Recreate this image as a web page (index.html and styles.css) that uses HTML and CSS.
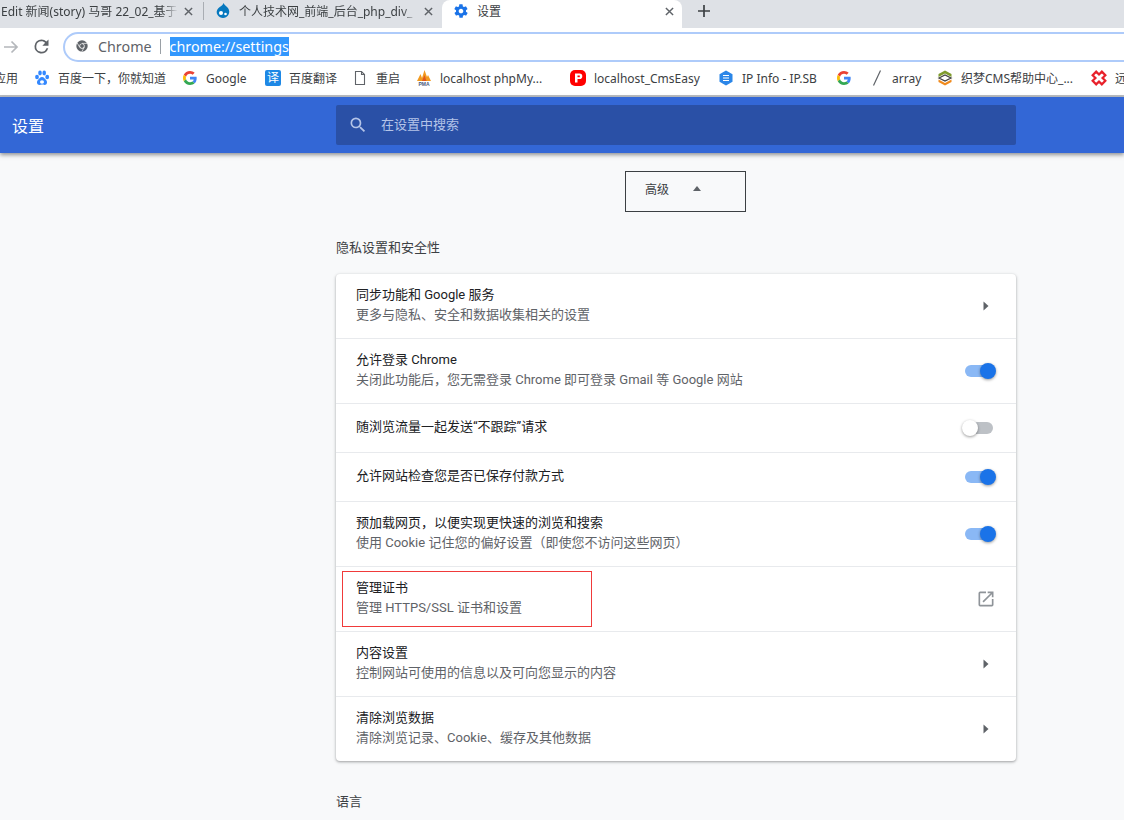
FILE: index.html
```html
<!DOCTYPE html>
<html lang="zh-CN">
<head>
    <meta charset="UTF-8">
    <title>设置</title>
    <link rel="stylesheet" href="styles.css">
</head>
<body>
    <svg class="defs" width="0" height="0">
        <symbol id="close" viewBox="0 0 10 10"><path d="M1 1l8 8M9 1l-8 8" stroke="#5f6368" stroke-width="1.600" fill="none"/></symbol>
        <symbol id="google" viewBox="0 0 48 48">
            <path fill="#EA4335" d="M24 9.500c3.500 0 6.700 1.300 9.100 3.500l6.800-6.800C35.800 2.400 30.300 0 24 0 14.600 0 6.500 5.400 2.600 13.200l7.900 6.100C12.400 13.600 17.700 9.500 24 9.500z"/>
            <path fill="#4285F4" d="M46.900 24.500c0-1.600-.2-3.100-.4-4.500H24v9h12.900c-.6 3-2.200 5.500-4.700 7.200l7.700 6c4.500-4.200 7-10.300 7-17.700z"/>
            <path fill="#FBBC05" d="M10.500 28.700c-.5-1.400-.8-3-.8-4.700s.3-3.300.8-4.700l-7.900-6.100C.9 16.500 0 20.100 0 24s.9 7.500 2.600 10.800l7.900-6.100z"/>
            <path fill="#34A853" d="M24 48c6.500 0 11.900-2.100 15.900-5.800l-7.700-6c-2.200 1.500-4.900 2.300-8.200 2.300-6.300 0-11.600-4.100-13.500-9.800l-7.900 6.100C6.500 42.600 14.600 48 24 48z"/>
        </symbol>
        <symbol id="arrow" viewBox="0 0 6 10"><path d="M0.500 0.500l5 4.500-5 4.500z" fill="#5f6368"/></symbol>
    </svg>

    <div class="tabstrip">
        <div class="tab tab-first">
            <span class="tab-title">Edit 新闻(story) 马哥 22_02_基于</span>
            <svg class="tab-close"><use href="#close"/></svg>
        </div>
        <div class="tab-sep"></div>
        <div class="tab tab-second">
            <svg class="favicon" viewBox="0 0 16 16"><path d="M8.500 0c.5 2 3 3 4.500 5 1.500 2 1.700 4.800.3 7-1.200 2-3.300 3-5.300 3s-4.200-1-5.400-3C1 9.800 1.600 7 3.300 5.200 5 3.500 7.800 2.500 8.500 0z" fill="#0678be"/><circle cx="6" cy="10" r="2" fill="#fff"/><circle cx="10.500" cy="11" r="1.300" fill="#fff"/></svg>
            <span class="tab-title">个人技术网_前端_后台_php_div_</span>
            <svg class="tab-close"><use href="#close"/></svg>
        </div>
        <div class="tab tab-active">
            <svg class="favicon" viewBox="0 0 24 24"><path fill="#1a73e8" d="M19.400 13c0-.3.100-.6.100-1s0-.7-.1-1l2.100-1.600c.2-.2.200-.4.100-.6l-2-3.500c-.1-.2-.4-.3-.6-.2l-2.500 1c-.5-.4-1.100-.7-1.700-1l-.4-2.600c0-.3-.2-.5-.5-.5h-4c-.3 0-.5.200-.5.400l-.4 2.700c-.6.200-1.100.6-1.700 1l-2.500-1c-.2-.1-.5 0-.6.200l-2 3.500c-.1.200-.1.500.1.600L4.600 11c0 .3-.1.700-.1 1s0 .7.100 1l-2.100 1.600c-.2.200-.2.400-.1.600l2 3.500c.1.200.4.300.6.200l2.500-1c.5.400 1.100.7 1.700 1l.4 2.700c0 .2.200.4.500.4h4c.3 0 .5-.2.500-.4l.4-2.700c.6-.2 1.200-.6 1.700-1l2.500 1c.2.100.5 0 .6-.2l2-3.500c.1-.2.100-.5-.1-.6L19.400 13zM12 15.500c-1.900 0-3.500-1.600-3.500-3.500s1.600-3.500 3.500-3.500 3.500 1.600 3.500 3.500-1.600 3.500-3.500 3.500z"/></svg>
            <span class="tab-title">设置</span>
            <svg class="tab-close"><use href="#close"/></svg>
        </div>
        <svg class="new-tab" viewBox="0 0 12 12"><path d="M6 0v12M0 6h12" stroke="#3c4043" stroke-width="1.700" fill="none"/></svg>
    </div>

    <div class="toolbar">
        <svg class="nav-icon nav-forward" viewBox="0 0 16 16"><path d="M1 8h13M8.500 2.500L14 8l-5.500 5.500" stroke="#b4b7bb" stroke-width="1.700" fill="none"/></svg>
        <svg class="nav-icon nav-reload" viewBox="0 0 24 24"><path fill="#5f6368" d="M17.650 6.350A7.960 7.960 0 0 0 12 4a8 8 0 1 0 7.730 10h-2.080A6 6 0 1 1 12 6c1.660 0 3.140.69 4.220 1.780L13 11h7V4l-2.350 2.350z"/></svg>
        <div class="omnibox">
            <svg class="chrome-icon" viewBox="0 0 16 16"><circle cx="8" cy="8" r="6.500" fill="#5f6368"/><circle cx="8" cy="8" r="3" fill="#fff"/><circle cx="8" cy="8" r="2.200" fill="#5f6368"/><path d="M8 5h6M5.400 9.500L2.500 4.500M10.600 9.500L7.700 14.500" stroke="#fff" stroke-width=".8"/></svg>
            <span class="omni-label">Chrome</span>
            <span class="omni-sep"></span>
            <span class="omni-url">chrome://settings</span>
        </div>
    </div>

    <div class="bookmarks">
        <span class="bm bm-apps">应用</span>
        <span class="bm bm-baidu">
            <svg class="bm-icon" viewBox="0 0 16 16"><g fill="#3388ff"><ellipse cx="3" cy="7" rx="1.900" ry="2.300"/><ellipse cx="6" cy="3" rx="1.800" ry="2.400"/><ellipse cx="10.200" cy="3" rx="1.800" ry="2.400"/><ellipse cx="13.200" cy="7" rx="1.900" ry="2.300"/><path d="M8 7c-2 0-3 2-4.300 3.300C2.300 12 3 15 5.500 15c1 0 1.600-.4 2.500-.4s1.500.4 2.700.4c2.300 0 3-3 1.600-4.700C11 9 10 7 8 7z"/></g><ellipse cx="8" cy="12" rx="2" ry="1.800" fill="#fff"/></svg>
            百度一下，你就知道
        </span>
        <span class="bm bm-google"><svg class="bm-icon bm-g-icon"><use href="#google"/></svg>Google</span>
        <span class="bm bm-fanyi"><span class="fanyi-icon">译</span>百度翻译</span>
        <span class="bm bm-restart">
            <svg class="bm-icon" viewBox="0 0 16 16"><path d="M3.500 1.500h6l3 3v10h-9zM9.500 1.500v3h3" stroke="#5f6368" stroke-width="1.100" fill="#fff"/></svg>
            重启
        </span>
        <span class="bm bm-pma">
            <svg class="bm-icon" viewBox="0 0 16 16"><path d="M1 11L4.500 4 6 8 8.500 0l2.500 7 1-2 3 6z" fill="#f29a1f"/><path d="M6 11l2.500-6 2 6z" fill="#e2581c"/><text class="pma-text" x="8" y="15.500" text-anchor="middle">PMA</text></svg>
            localhost phpMy...
        </span>
        <span class="bm bm-cms">
            <svg class="bm-icon" viewBox="0 0 16 16"><rect x="0" y="0" width="16" height="16" rx="5" fill="#f00"/><path d="M5 3.500h4.500a2.700 2.700 0 0 1 0 5.600H7.500v3.500H5z" fill="#fff"/><rect x="7.500" y="5.500" width="2.300" height="1.700" fill="#f00"/></svg>
            localhost_CmsEasy
        </span>
        <span class="bm bm-ip">
            <svg class="bm-icon" viewBox="0 0 16 16"><path d="M8 0.500l6.500 3.700v7.600L8 15.500l-6.500-3.700V4.200z" fill="#2b86e8"/><path d="M5 5.500h6M5 8h6M5 10.500h6" stroke="#fff" stroke-width="1.100"/></svg>
            IP Info - IP.SB
        </span>
        <span class="bm bm-g2"><svg class="bm-icon bm-g-icon"><use href="#google"/></svg></span>
        <span class="bm bm-array">
            <svg class="bm-icon" viewBox="0 0 16 16"><path d="M12.500 0.500L5.500 15.500" stroke="#5f6368" stroke-width="1.200"/></svg>
            array
        </span>
        <span class="bm bm-dede">
            <svg class="bm-icon" viewBox="0 0 16 16"><path d="M8 0.500l6.500 3.500v3L8 3.500 1.500 7V4z" fill="#7f9b2d"/><path d="M2 8l6-3 6 3-6 3z" fill="none" stroke="#444" stroke-width="1.300"/><path d="M1.500 9.500V12L8 15.500l6.500-3.500V9.500L8 13z" fill="#f08a1d"/></svg>
            织梦CMS帮助中心_...
        </span>
        <span class="bm bm-yuan">
            <svg class="bm-icon" viewBox="0 0 16 16"><path d="M5.500 1.500h5v4h4v5h-4v4h-5v-4h-4v-5h4z" transform="rotate(45 8 8)" fill="none" stroke="#e8212b" stroke-width="2.200"/></svg>
            远程
        </span>
    </div>

    <header class="settings-header">
        <div class="settings-title">设置</div>
        <div class="search-box">
            <svg class="search-icon" viewBox="0 0 24 24"><path fill="#b4c4e8" d="M15.500 14h-.79l-.28-.27A6.470 6.470 0 0 0 16 9.500 6.500 6.500 0 1 0 9.500 16c1.610 0 3.090-.59 4.230-1.570l.27.28v.79l5 4.990L20.490 19l-4.990-5zm-6 0C7.010 14 5 11.990 5 9.500S7.010 5 9.500 5 14 7.010 14 9.500 11.990 14 9.500 14z"/></svg>
            <span class="search-text">在设置中搜索</span>
        </div>
    </header>

    <main class="content">
        <div class="advanced-wrap">
            <div class="advanced-btn">高级<span class="caret-up"></span></div>
        </div>

        <h2 class="section-title">隐私设置和安全性</h2>
        <section class="card">
            <div class="row row-tall">
                <div class="row-text">
                    <div class="row-title">同步功能和 Google 服务</div>
                    <div class="row-sub">更多与隐私、安全和数据收集相关的设置</div>
                </div>
                <svg class="row-arrow"><use href="#arrow"/></svg>
            </div>
            <div class="row row-tall">
                <div class="row-text">
                    <div class="row-title">允许登录 Chrome</div>
                    <div class="row-sub">关闭此功能后，您无需登录 Chrome 即可登录 Gmail 等 Google 网站</div>
                </div>
                <div class="toggle toggle-on"><span class="knob"></span></div>
            </div>
            <div class="row">
                <div class="row-text">
                    <div class="row-title">随浏览流量一起发送“不跟踪”请求</div>
                </div>
                <div class="toggle toggle-off"><span class="knob"></span></div>
            </div>
            <div class="row">
                <div class="row-text">
                    <div class="row-title">允许网站检查您是否已保存付款方式</div>
                </div>
                <div class="toggle toggle-on"><span class="knob"></span></div>
            </div>
            <div class="row row-tall">
                <div class="row-text">
                    <div class="row-title">预加载网页，以便实现更快速的浏览和搜索</div>
                    <div class="row-sub">使用 Cookie 记住您的偏好设置（即使您不访问这些网页）</div>
                </div>
                <div class="toggle toggle-on"><span class="knob"></span></div>
            </div>
            <div class="row row-tall row-marked">
                <div class="red-mark"></div>
                <div class="row-text">
                    <div class="row-title">管理证书</div>
                    <div class="row-sub">管理 HTTPS/SSL 证书和设置</div>
                </div>
                <svg class="row-external" viewBox="0 0 24 24"><path fill="#8f9499" d="M19 19H5V5h7V3H5a2 2 0 0 0-2 2v14a2 2 0 0 0 2 2h14a2 2 0 0 0 2-2v-7h-2v7zM14 3v2h3.590l-9.830 9.830 1.410 1.410L19 6.410V10h2V3h-7z"/></svg>
            </div>
            <div class="row row-tall">
                <div class="row-text">
                    <div class="row-title">内容设置</div>
                    <div class="row-sub">控制网站可使用的信息以及可向您显示的内容</div>
                </div>
                <svg class="row-arrow"><use href="#arrow"/></svg>
            </div>
            <div class="row row-tall">
                <div class="row-text">
                    <div class="row-title">清除浏览数据</div>
                    <div class="row-sub">清除浏览记录、Cookie、缓存及其他数据</div>
                </div>
                <svg class="row-arrow"><use href="#arrow"/></svg>
            </div>
        </section>

        <h2 class="section-title section-lang">语言</h2>
    </main>
</body>
</html>
```

FILE: styles.css
```css
html, body {
    height: 820px;
    overflow: hidden;
}

body {
    margin: 0;
    font-family: Roboto, "Noto Sans CJK SC", sans-serif;
    font-size: 13px;
    color: #202124;
    background-color: #f8f9fa;
}

.defs {
    display: block;
    height: 0;
}

/* tabs */
.tabstrip {
    display: flex;
    height: 28px;
    background-color: #dee1e6;
    font-family: "Noto Sans", "Noto Sans CJK SC", sans-serif;
    font-size: 12px;
    color: #3c4043;
}

.tab {
    display: flex;
    align-items: center;
    height: 28px;
    padding-bottom: 6px;
    box-sizing: border-box;
    white-space: nowrap;
    flex: none;
}

.tab-first {
    width: 203px;
    padding-left: 1px;
}

.tab-first .tab-title {
    width: 177px;
}

.tab-sep {
    width: 1px;
    height: 18px;
    margin-top: 2px;
    background-color: #a9adb3;
    flex: none;
}

.tab-second {
    width: 238px;
    padding-left: 11px;
}

.tab-second .tab-title {
    width: 179px;
}

.tab-first .tab-title,
.tab-second .tab-title {
    -webkit-mask-image: linear-gradient(to left, transparent, #000 16px);
    mask-image: linear-gradient(to left, transparent, #000 16px);
}

.tab-active {
    width: 240px;
    padding-left: 11px;
    background-color: #fff;
    border-radius: 8px 8px 0 0;
}

.tab-active .tab-title {
    width: 182px;
}

.tab-title {
    display: block;
    overflow: hidden;
}

.favicon {
    width: 16px;
    height: 16px;
    margin-right: 8px;
    flex: none;
}

.tab-close {
    width: 9px;
    height: 9px;
    margin-left: 6px;
    flex: none;
}

.new-tab {
    width: 12px;
    height: 12px;
    margin: 5px 0 0 16px;
    flex: none;
}

/* address bar */
.toolbar {
    display: flex;
    align-items: center;
    height: 37px;
    background-color: #fff;
}

.nav-icon {
    flex: none;
}

.nav-forward {
    width: 16px;
    height: 16px;
    margin-left: 3px;
}

.nav-reload {
    width: 21px;
    height: 21px;
    margin-left: 12px;
}

.omnibox {
    display: flex;
    align-items: center;
    height: 25px;
    width: 1100px;
    margin-left: 11px;
    padding: 0 0 1px 10px;
    border: 2px solid #aecbfa;
    border-radius: 16px;
    flex: none;
    font-family: "Noto Sans", sans-serif;
    font-size: 14.300px;
}

.chrome-icon {
    width: 14px;
    height: 14px;
    margin-right: 9px;
}

.omni-label {
    color: #5f6368;
}

.omni-sep {
    width: 1px;
    height: 15px;
    margin: 0 9px 0 8px;
    background-color: #9aa0a6;
}

.omni-url {
    background-color: #3297fd;
    color: #fff;
    line-height: 19px;
}

/* bookmarks */
.bookmarks {
    display: flex;
    align-items: center;
    height: 26px;
    padding-bottom: 4px;
    background-color: #fff;
    border-bottom: 2px solid #b9bcc0;
    font-family: "Noto Sans", "Noto Sans CJK SC", sans-serif;
    font-size: 12px;
    color: #3c4043;
    white-space: nowrap;
}

.bm {
    display: flex;
    align-items: center;
    flex: none;
}

.bm-icon {
    width: 16px;
    height: 16px;
    margin-right: 8px;
    flex: none;
}

.bm-g-icon {
    width: 14px;
    height: 14px;
    margin: 0 9px 0 1px;
}

.pma-text {
    font-family: "Liberation Sans", sans-serif;
    font-size: 5px;
    font-weight: 700;
    fill: #4a5a7a;
}

.fanyi-icon {
    display: block;
    width: 16px;
    height: 16px;
    margin-right: 8px;
    border-radius: 2px;
    background-color: #1e88e5;
    color: #fff;
    font-size: 12px;
    line-height: 16px;
    text-align: center;
}

.bm-apps { width: 40px; margin-left: -6px; }
.bm-baidu { width: 148px; }
.bm-google { width: 83px; }
.bm-fanyi { width: 87px; }
.bm-restart { width: 64px; }
.bm-pma { width: 154px; }
.bm-cms { width: 148px; }
.bm-ip { width: 118px; }
.bm-g2 { width: 32px; }
.bm-array { width: 69px; }
.bm-dede { width: 154px; }
.bm-yuan { width: 60px; }

/* settings header */
.settings-header {
    display: flex;
    height: 56px;
    background-color: #3367d6;
    box-shadow: 0 2px 4px rgba(60, 64, 67, 0.55);
    position: relative;
}

.settings-title {
    width: 336px;
    padding-left: 12px;
    box-sizing: border-box;
    color: #fff;
    font-size: 16px;
    line-height: 59px;
}

.search-box {
    display: flex;
    align-items: center;
    width: 680px;
    height: 40px;
    margin-top: 8px;
    background-color: #2a50a6;
    border-radius: 2px;
}

.search-icon {
    width: 20px;
    height: 20px;
    margin-left: 12px;
}

.search-text {
    margin-left: 13px;
    padding-bottom: 4px;
    color: #b4c4e8;
    font-size: 13px;
}

/* content */
.content {
    width: 680px;
    margin-left: 336px;
}

.advanced-wrap {
    display: flex;
    justify-content: center;
    padding-top: 18px;
    padding-left: 19px;
}

.advanced-btn {
    display: flex;
    align-items: center;
    width: 121px;
    height: 41px;
    padding: 0 0 7px 19px;
    box-sizing: border-box;
    border: 1px solid #3c4043;
    color: #3c4043;
    font-size: 12px;
}

.caret-up {
    width: 0;
    height: 0;
    margin-left: 24px;
    border-left: 4.500px solid transparent;
    border-right: 4.500px solid transparent;
    border-bottom: 5px solid #5f6368;
}

.section-title {
    margin: 27px 0 17px;
    font-size: 13px;
    font-weight: 400;
    line-height: 18px;
    color: #3c4043;
}

.section-lang {
    margin-top: 32px;
}

.card {
    background-color: #fff;
    border-radius: 4px;
    box-shadow: 0 1px 2px rgba(60, 64, 67, 0.3), 0 1px 3px 1px rgba(60, 64, 67, 0.15);
}

.row {
    display: flex;
    align-items: center;
    justify-content: space-between;
    height: 48px;
    padding: 0 20px;
    border-top: 1px solid #e8eaed;
    position: relative;
}

.row:first-child {
    border-top: none;
}

.row-tall {
    height: 64px;
}

.row-text {
    padding-bottom: 2px;
}

.row-title {
    line-height: 20px;
    color: #202124;
}

.row-sub {
    line-height: 20px;
    color: #5f6368;
}

.row-arrow {
    width: 6px;
    height: 10px;
    margin-right: 7px;
}

.row-external {
    width: 20px;
    height: 20px;
}

.toggle {
    position: relative;
    width: 28px;
    height: 12px;
    border-radius: 6px;
    margin-right: 3px;
}

.toggle-on {
    background-color: #8ab8f5;
}

.toggle-off {
    background-color: #bdc1c6;
}

.knob {
    position: absolute;
    top: -2px;
    width: 16px;
    height: 16px;
    border-radius: 50%;
    box-shadow: 0 1px 3px rgba(0, 0, 0, 0.4);
}

.toggle-on .knob {
    right: -3px;
    background-color: #1a73e8;
}

.toggle-off .knob {
    left: -3px;
    background-color: #fff;
}

/* hand drawn annotation over the row */
.red-mark {
    position: absolute;
    left: 6px;
    top: 4px;
    width: 250px;
    height: 56px;
    box-sizing: border-box;
    border: 1px solid #f03a3a;
}
```
